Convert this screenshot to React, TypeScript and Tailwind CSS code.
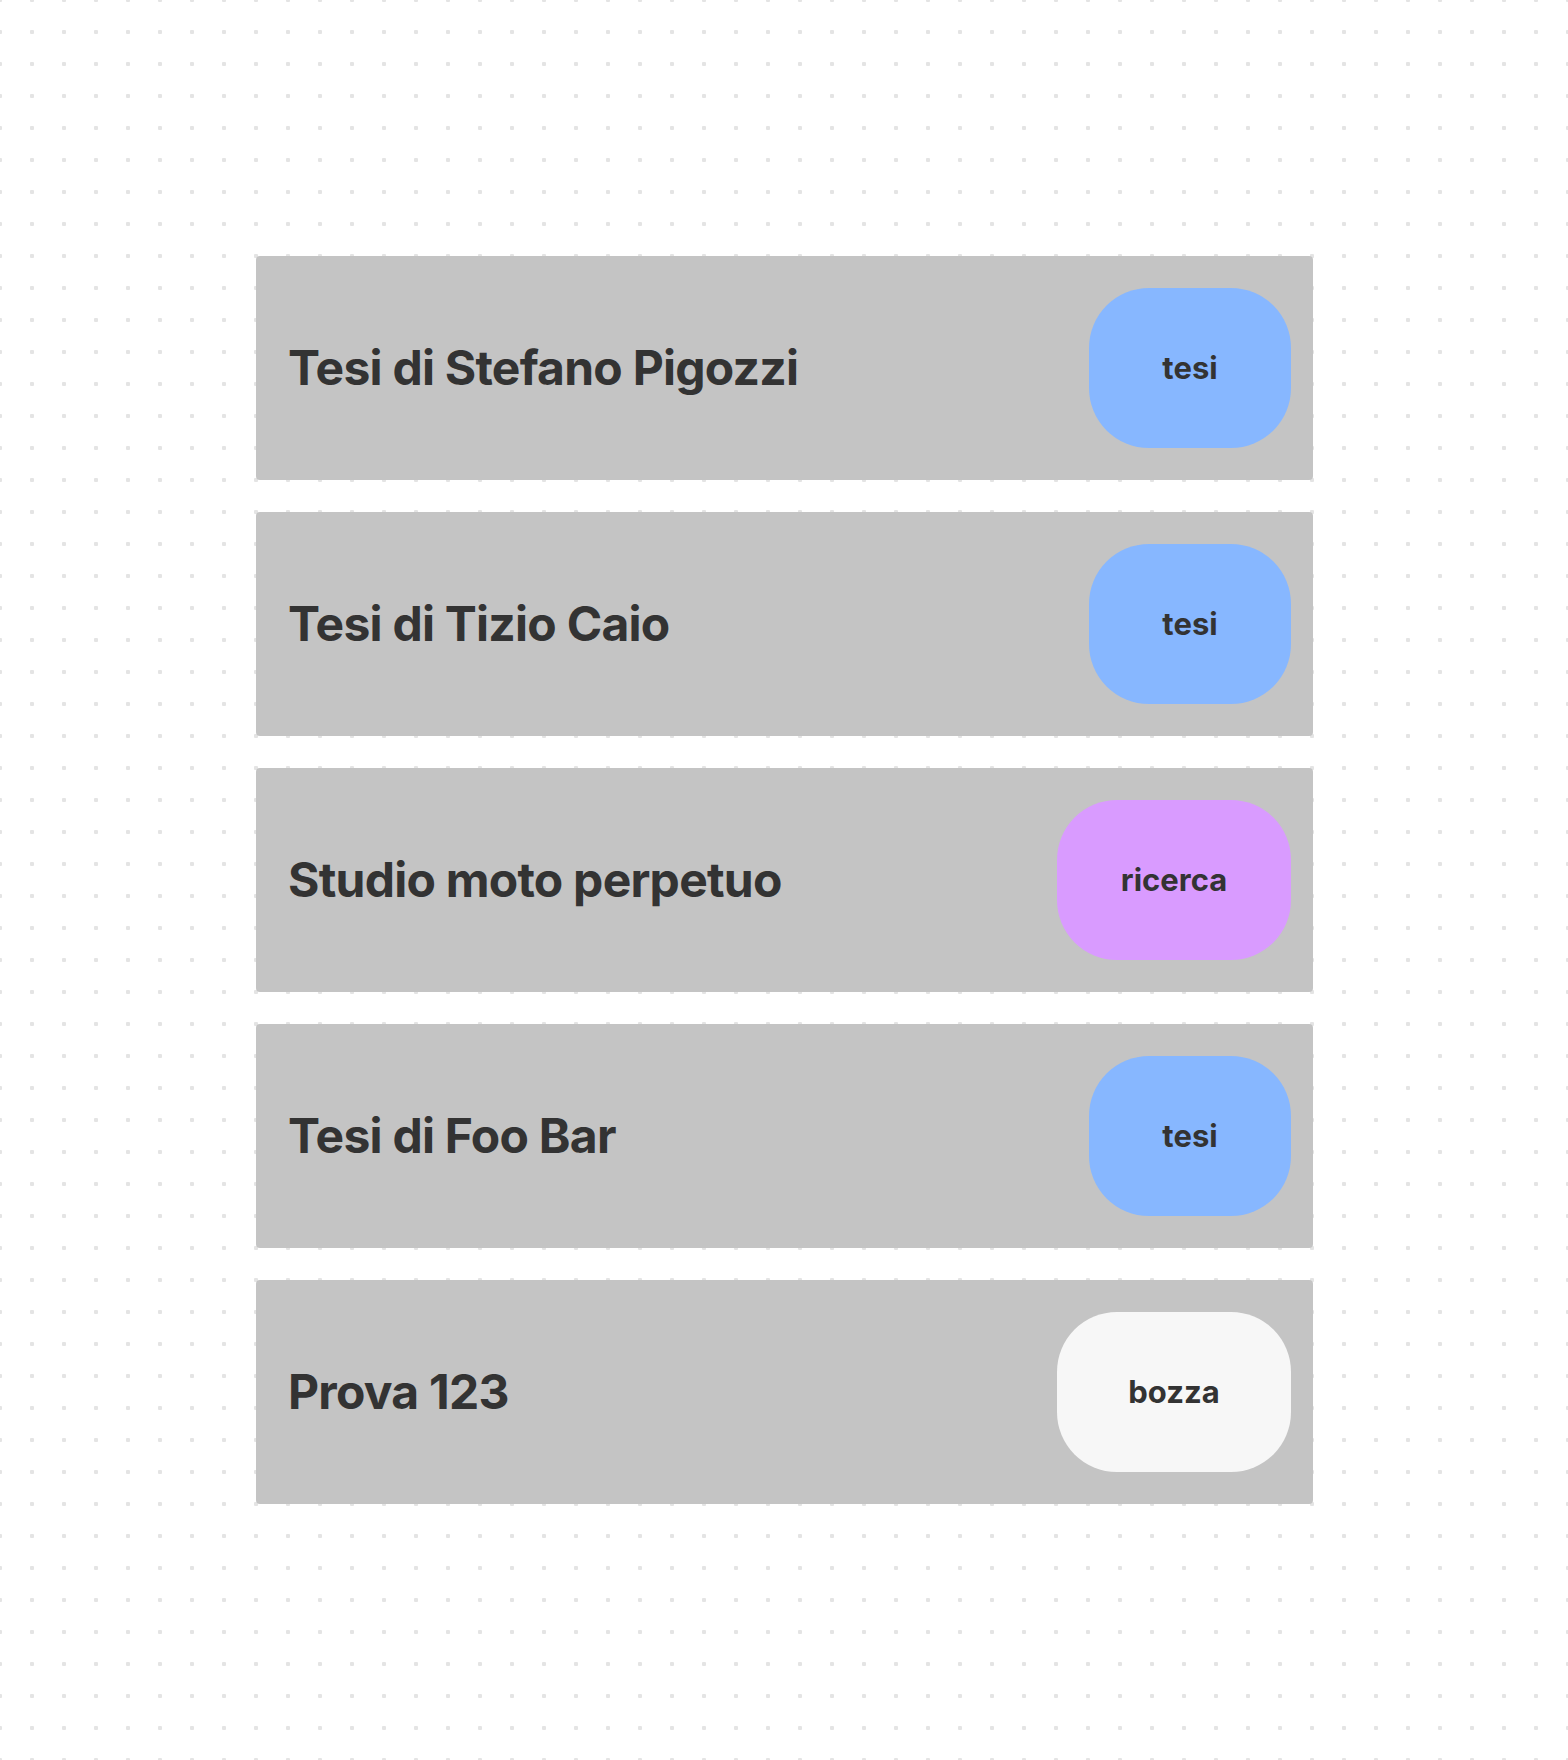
const items = [
  { title: "Tesi di Stefano Pigozzi", tag: "tesi", tagClass: "bg-[#87b7ff] w-[202px]" },
  { title: "Tesi di Tizio Caio", tag: "tesi", tagClass: "bg-[#87b7ff] w-[202px]" },
  { title: "Studio moto perpetuo", tag: "ricerca", tagClass: "bg-[#d99bff] w-[234px]" },
  { title: "Tesi di Foo Bar", tag: "tesi", tagClass: "bg-[#87b7ff] w-[202px]" },
  { title: "Prova 123", tag: "bozza", tagClass: "bg-[#f7f7f7] w-[234px]" },
];

export default function App() {
  return (
    <div className="min-h-[1760px] w-full bg-white bg-[radial-gradient(circle,#e4e4e4_2px,transparent_2.5px)] bg-[size:32px_32px] bg-[position:-16px_-16px] pt-[256px] pl-[256px] font-['Inter',sans-serif] text-[#333333]">
      <ul className="flex w-[1057px] flex-col gap-8">
        {items.map((item) => (
          <li
            key={item.title}
            className="flex h-[224px] items-center justify-between rounded-[4px] bg-[#c4c4c4] pl-8 pr-[22px]"
          >
            <span className="text-[48px] font-bold tracking-[-0.75px]">{item.title}</span>
            <span
              className={`flex h-[160px] items-center justify-center rounded-[60px] text-[31px] font-bold ${item.tagClass}`}
            >
              {item.tag}
            </span>
          </li>
        ))}
      </ul>
    </div>
  );
}
